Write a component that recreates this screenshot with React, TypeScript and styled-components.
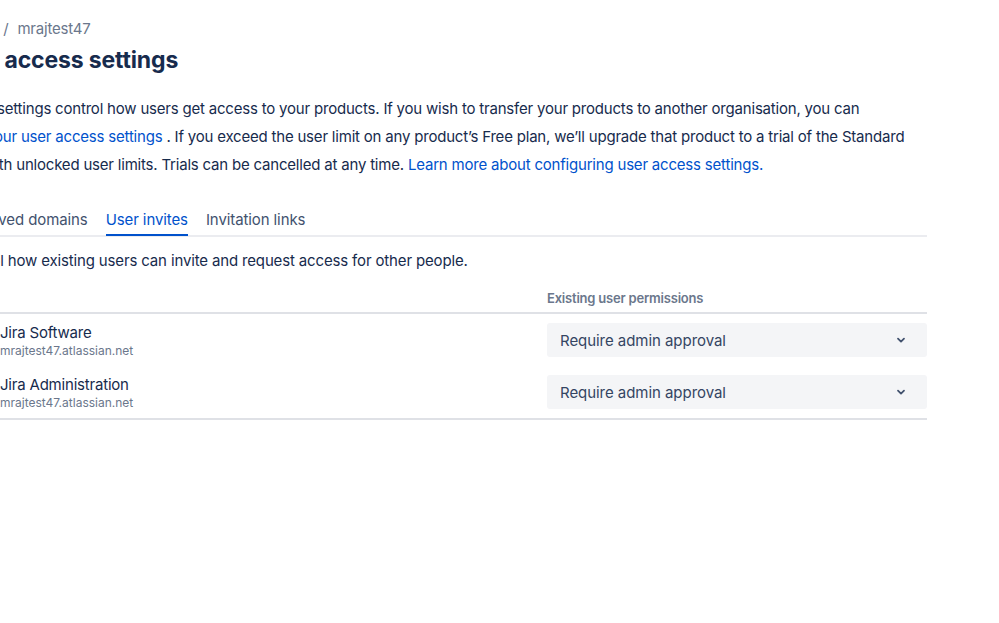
import React from "react";
import styled, { createGlobalStyle } from "styled-components";

const GlobalStyle = createGlobalStyle`
  html, body {
    margin: 0;
    padding: 0;
    background: #ffffff;
    overflow: hidden;
  }
  body {
    font-family: Inter, "Noto Sans", "Liberation Sans", sans-serif;
    letter-spacing: -0.2px;
    color: #172b4d;
    -webkit-font-smoothing: antialiased;
  }
`;

const Page = styled.main`
  width: 977px;
  margin-left: -50px;
  padding-top: 18px;
`;

const Breadcrumbs = styled.nav`
  display: flex;
  align-items: center;
  gap: 9px;
  font-size: 15px;
  line-height: 22px;
  color: #6b778c;
`;

const Heading = styled.h1`
  margin: 6px 0 0 -3px;
  font-size: 23px;
  line-height: 28px;
  font-weight: 700;
  letter-spacing: -0.15px;
  color: #172b4d;
`;

const Intro = styled.p`
  margin: 21px 0 0;
  font-size: 15px;
  line-height: 28px;
  white-space: nowrap;
  color: #172b4d;
`;

const Link = styled.a`
  color: #0052cc;
  text-decoration: none;
  cursor: pointer;
`;

const Tabs = styled.div`
  display: flex;
  gap: 18px;
  margin-top: 30px;
  padding-left: 6px;
  border-bottom: 2px solid #ebecf0;
`;

const Tab = styled.button<{ $active?: boolean }>`
  position: relative;
  background: none;
  border: 0;
  padding: 0 0 4px;
  font-family: inherit;
  font-size: 15px;
  line-height: 22px;
  letter-spacing: -0.1px;
  color: ${(p) => (p.$active ? "#0052cc" : "#42526e")};
  cursor: pointer;

  &::after {
    content: "";
    position: absolute;
    left: 0;
    right: 0;
    bottom: -1px;
    height: 2px;
    background: ${(p) => (p.$active ? "#0052cc" : "transparent")};
  }
`;

const TabNote = styled.p`
  margin: 13px 0 0;
  padding-left: 3px;
  font-size: 15px;
  line-height: 22px;
  letter-spacing: -0.15px;
  color: #172b4d;
`;

const Table = styled.div`
  margin-top: 18px;
  border-bottom: 2px solid #dfe1e6;
`;

const HeaderRow = styled.div`
  display: grid;
  grid-template-columns: 1fr 380px;
  padding-bottom: 6px;
  border-bottom: 2px solid #dfe1e6;
  font-size: 13px;
  line-height: 16px;
  font-weight: 600;
  color: #6b778c;
`;

const Row = styled.div`
  display: grid;
  grid-template-columns: 1fr 380px;
  align-items: start;
  height: 52px;
  padding-top: 9px;
  box-sizing: border-box;
`;

const Product = styled.div`
  display: flex;
  align-items: center;
  gap: 18px;
`;

const ProductText = styled.div`
  display: flex;
  flex-direction: column;
`;

const ProductName = styled.span`
  font-size: 15px;
  line-height: 20px;
  color: #172b4d;
`;

const ProductSite = styled.span`
  font-size: 12px;
  line-height: 16px;
  letter-spacing: 0;
  color: #6b778c;
`;

const Select = styled.button`
  display: flex;
  align-items: center;
  justify-content: space-between;
  height: 34px;
  padding: 0 20px 0 13px;
  border: 0;
  border-radius: 3px;
  background: #f4f5f7;
  font-family: inherit;
  font-size: 15px;
  letter-spacing: -0.05px;
  color: #344563;
  cursor: pointer;
`;

const JiraLogo = () => (
  <svg width="32" height="32" viewBox="0 0 32 32" aria-hidden>
    <path d="M29 3H15.5a6 6 0 0 0 6 6H24v2.4a6 6 0 0 0 6 6V4a1 1 0 0 0-1-1z" fill="#2684ff" />
    <path d="M22.4 9.6H8.9a6 6 0 0 0 6 6h2.5V18a6 6 0 0 0 6 6V10.6a1 1 0 0 0-1-1z" fill="#2684ff" />
    <path d="M15.8 16.2H2.3a6 6 0 0 0 6 6h2.5v2.4a6 6 0 0 0 6 6V17.2a1 1 0 0 0-1-1z" fill="#0052cc" />
  </svg>
);

const Chevron = () => (
  <svg width="12" height="12" viewBox="0 0 12 12" aria-hidden>
    <path d="M3 4.6l3 3 3-3" fill="none" stroke="#42526e" strokeWidth="1.8" strokeLinecap="round" strokeLinejoin="round" />
  </svg>
);

const products = [
  { name: "Jira Software", site: "mrajtest47.atlassian.net" },
  { name: "Jira Administration", site: "mrajtest47.atlassian.net" },
];

export default function App() {
  return (
    <>
      <GlobalStyle />
      <Page>
        <Breadcrumbs>
          <span>Admin</span>
          <span>/</span>
          <span>mrajtest47</span>
        </Breadcrumbs>
        <Heading>User access settings</Heading>
        <Intro>
          These settings control how users get access to your products. If you wish to transfer your products to another organisation, you can
          <br />
          view <Link>your user access settings</Link> . If you exceed the user limit on any product’s Free plan, we’ll upgrade that product to a trial of the Standard
          <br />
          plan with unlocked user limits. Trials can be cancelled at any time.{" "}
          <Link>Learn more about configuring user access settings.</Link>
        </Intro>
        <Tabs>
          <Tab>Approved domains</Tab>
          <Tab $active>User invites</Tab>
          <Tab>Invitation links</Tab>
        </Tabs>
        <TabNote>Control how existing users can invite and request access for other people.</TabNote>
        <Table>
          <HeaderRow>
            <span>Product</span>
            <span>Existing user permissions</span>
          </HeaderRow>
          {products.map((p) => (
            <Row key={p.name}>
              <Product>
                <JiraLogo />
                <ProductText>
                  <ProductName>{p.name}</ProductName>
                  <ProductSite>{p.site}</ProductSite>
                </ProductText>
              </Product>
              <Select>
                <span>Require admin approval</span>
                <Chevron />
              </Select>
            </Row>
          ))}
        </Table>
      </Page>
    </>
  );
}
